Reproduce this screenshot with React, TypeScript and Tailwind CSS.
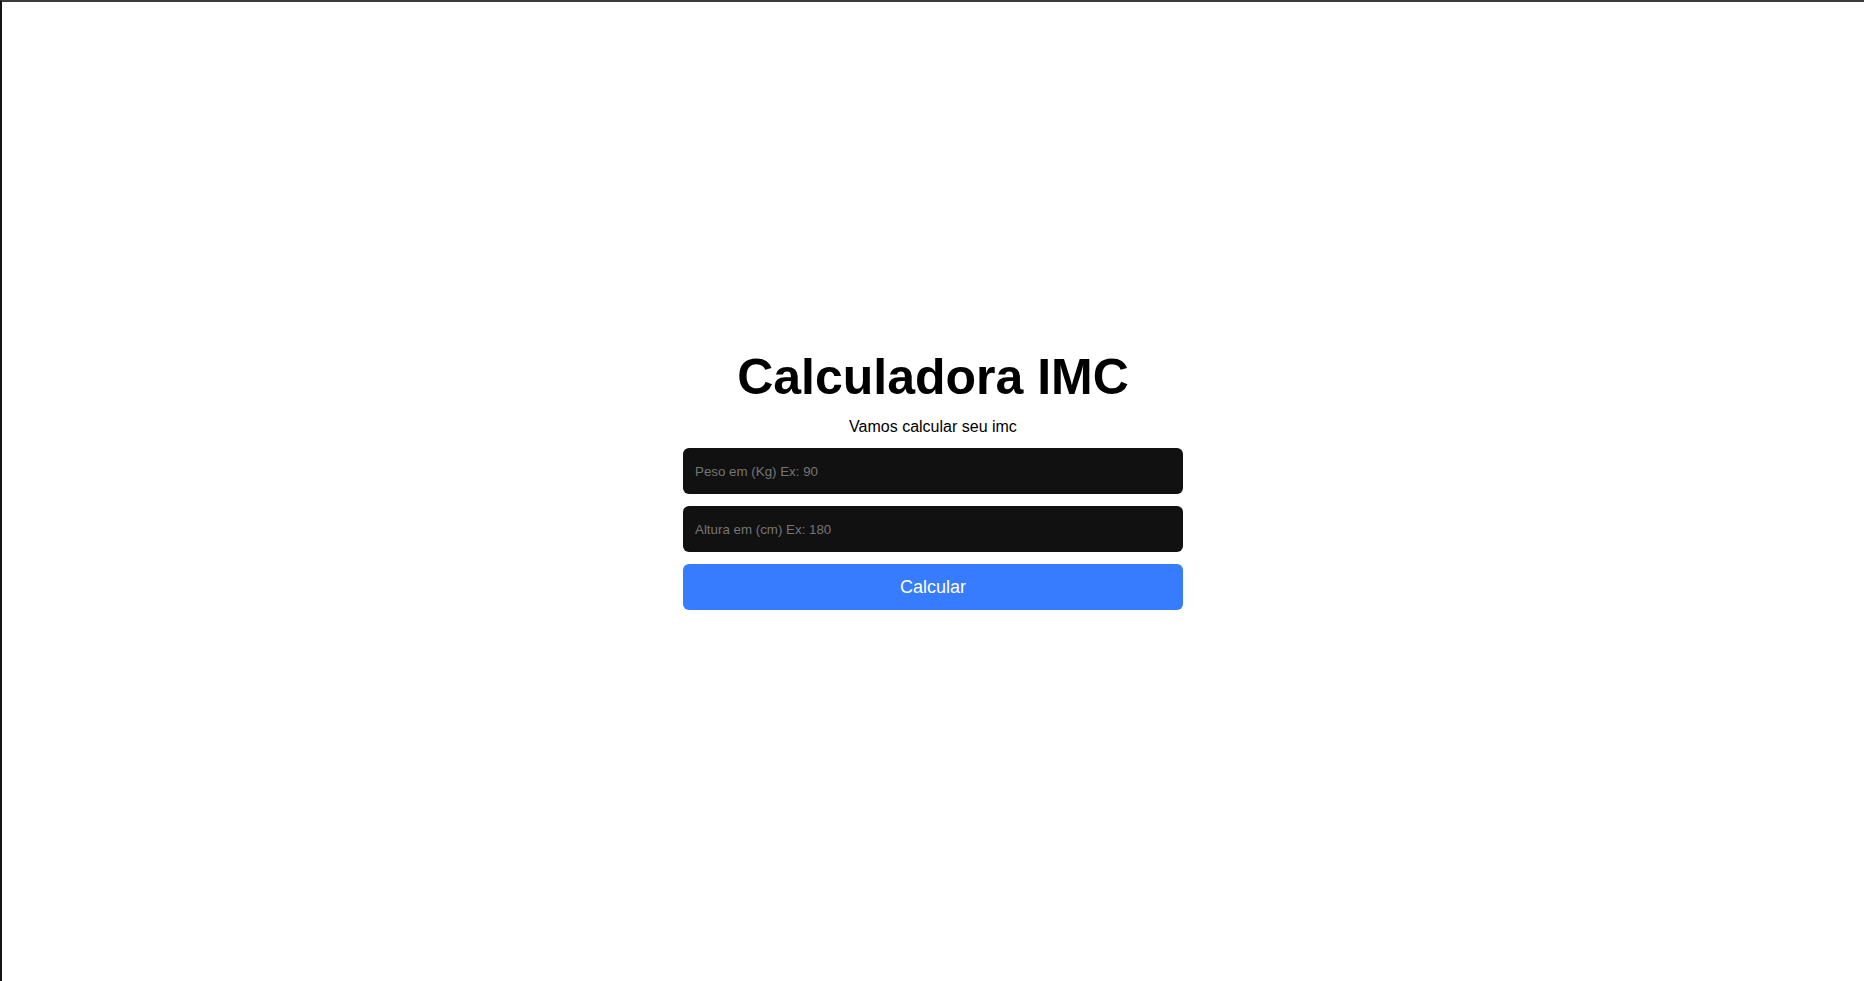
import React from "react";

export default function App() {
  return (
    <div className="min-h-screen bg-white border-t-2 border-l-2 border-t-[#3b3b3b] border-l-[#141414] font-['Liberation_Sans',Arial,sans-serif] text-black">
      <div className="flex flex-col items-center pt-[347px]">
        <h1 className="text-[50px] font-bold leading-[1.15] m-0">Calculadora IMC</h1>
        <p className="mt-[11px] text-[16px] leading-[1.15]">Vamos calcular seu imc</p>
        <input
          type="text"
          placeholder="Peso em (Kg) Ex: 90"
          className="mt-[12px] w-[500px] h-[46px] rounded-[6px] bg-[#111111] px-3 pt-[2px] text-[13.33px] text-white placeholder:text-[#757575] outline-none font-['Liberation_Sans',Arial,sans-serif]"
        />
        <input
          type="text"
          placeholder="Altura em (cm) Ex: 180"
          className="mt-[12px] w-[500px] h-[46px] rounded-[6px] bg-[#111111] px-3 pt-[2px] text-[13.33px] text-white placeholder:text-[#757575] outline-none font-['Liberation_Sans',Arial,sans-serif]"
        />
        <button
          type="button"
          className="mt-[12px] w-[500px] h-[46px] rounded-[6px] bg-[#377cff] pt-[2px] text-white text-[18px] font-['Liberation_Sans',Arial,sans-serif] cursor-pointer"
        >
          Calcular
        </button>
      </div>
    </div>
  );
}
